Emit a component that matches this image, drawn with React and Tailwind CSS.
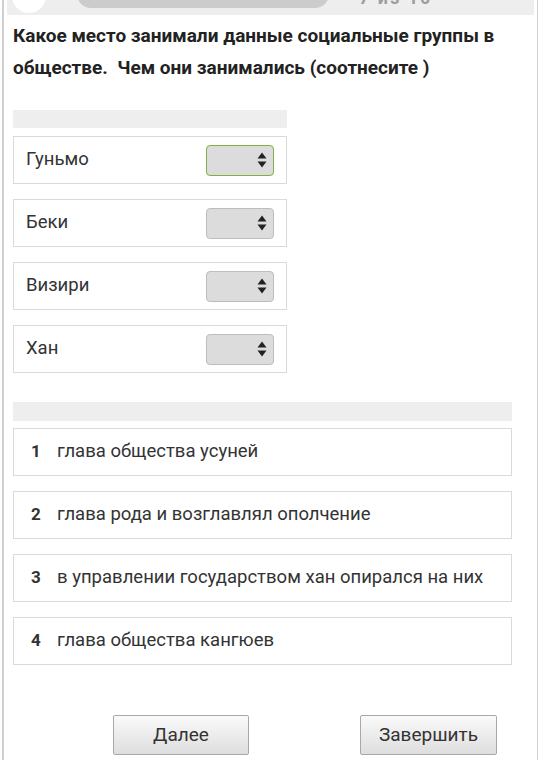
import React from "react";

const font = { fontFamily: "Roboto, 'Noto Sans', sans-serif" };

function SortIcon() {
  return (
    <svg width="10" height="16" viewBox="0 0 10 16" className="shrink-0">
      <path d="M5 0.5 L9.5 6.5 L0.5 6.5 Z" fill="#222" />
      <path d="M5 15.5 L9.5 9.5 L0.5 9.5 Z" fill="#222" />
    </svg>
  );
}

function SelectBox({ active }) {
  return (
    <div
      className={
        "w-[68px] h-[31px] rounded-[4px] bg-[#dcdcdc] border flex items-center justify-end pr-[6px] " +
        (active ? "border-[#7cb342]" : "border-[#bdbdbd]")
      }
    >
      <SortIcon />
    </div>
  );
}

const lefts = ["Гуньмо", "Беки", "Визири", "Хан"];
const rights = [
  "глава общества усуней",
  "глава рода и возглавлял ополчение",
  "в управлении государством хан опирался на них",
  "глава общества кангюев",
];

export default function App() {
  return (
    <div className="w-[540px] h-[760px] bg-white overflow-hidden" style={font}>
      <div className="ml-[2px] mr-[2px] h-full border-l-2 border-r border-[#d0d0d0] flex flex-col">
        <div className="mx-[3px] h-[15px] bg-[#eeeeee] overflow-hidden flex items-end shrink-0">
          <div className="ml-[5px] mb-[2px] w-[34px] h-[34px] rounded-full bg-white shrink-0" />
          <div className="ml-[31px] mb-[7px] w-[252px] h-[30px] rounded-[14px] bg-[#cccccc] shrink-0" />
          <div className="ml-[30px] mb-[7px] text-[18px] leading-[20px] text-[#9e9e9e] font-bold tracking-[2px] whitespace-nowrap">
            7 из 10
          </div>
        </div>

        <div className="px-[9px] mt-[5px] text-[19px] leading-[32px] font-bold text-[#222]">
          Какое место занимали данные социальные группы в обществе.&nbsp; Чем они занимались (соотнесите )
        </div>

        <div className="px-[9px] mt-[26px]">
          <div className="w-[274px] h-[18px] bg-[#eeeeee]" />
          <div className="mt-[8px] flex flex-col gap-[15px] w-[274px]">
            {lefts.map((t, i) => (
              <div
                key={t}
                className="h-[48px] border border-[#dadada] flex items-center justify-between pl-[12px] pr-[12px]"
              >
                <span className="text-[18.5px] text-[#333]">{t}</span>
                <SelectBox active={i === 0} />
              </div>
            ))}
          </div>
        </div>

        <div className="px-[9px] mt-[29px]">
          <div className="w-[499px] h-[19px] bg-[#eeeeee]" />
          <div className="mt-[7px] flex flex-col gap-[15px] w-[499px]">
            {rights.map((t, i) => (
              <div
                key={t}
                className="h-[48px] border border-[#dadada] flex items-center pl-[17px]"
              >
                <span className="w-[26px] text-[17px] font-bold text-[#333]">{i + 1}</span>
                <span className="text-[18.5px] text-[#333]">{t}</span>
              </div>
            ))}
          </div>
        </div>

        <div className="mt-[50px] flex pl-[109px]">
          <button className="w-[136px] h-[40px] border border-[#a8a8a8] rounded-[2px] bg-gradient-to-b from-[#fafafa] to-[#dedede] text-[19px] text-[#333]">
            Далее
          </button>
          <button className="ml-[111px] w-[137px] h-[40px] border border-[#a8a8a8] rounded-[2px] bg-gradient-to-b from-[#fafafa] to-[#dedede] text-[19px] text-[#333]">
            Завершить
          </button>
        </div>
      </div>
    </div>
  );
}
